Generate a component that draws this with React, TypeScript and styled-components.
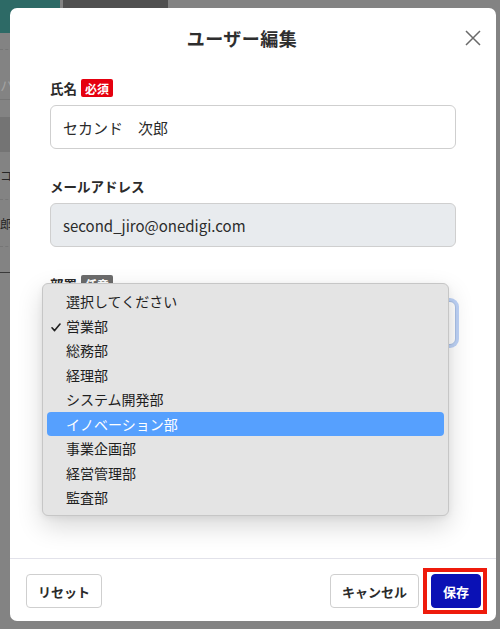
import React from "react";
import styled, { createGlobalStyle } from "styled-components";

const GlobalStyle = createGlobalStyle`
  html, body { margin: 0; padding: 0; }
  body {
    font-family: "Noto Sans CJK JP", "Noto Sans", sans-serif;
    background: #838383;
    color: #2b2b2b;
  }
  * { box-sizing: border-box; }
`;

/* ---------- dimmed application behind the dialog ---------- */

const Page = styled.div`
  position: relative;
  width: 500px;
  height: 629px;
  overflow: hidden;
  background: #838383;
`;

const TopBar = styled.div`
  display: flex;
  align-items: flex-start;
  gap: 3px;
`;

const Tab = styled.div<{ $w: number; $h: number; $bg: string }>`
  width: ${(p) => p.$w}px;
  height: ${(p) => p.$h}px;
  background: ${(p) => p.$bg};
`;

const SideList = styled.div`
  display: flex;
  flex-direction: column;
  width: 40px;
`;

const Row = styled.div<{ $h: number; $shade?: boolean; $line?: string; $offset?: number }>`
  height: ${(p) => p.$h}px;
  padding-top: ${(p) => p.$offset ?? 0}px;
  display: flex;
  align-items: center;
  font-size: 12px;
  color: #262626;
  background: ${(p) => (p.$shade ? "#747474" : "transparent")};
  border-bottom: ${(p) => p.$line ?? "none"};
`;

const Faint = styled.span`
  color: #a2a2a2;
  font-size: 14px;
`;

/* ---------- dialog ---------- */

const Dialog = styled.div`
  position: absolute;
  top: 8px;
  left: 10px;
  width: 486px;
  height: 613px;
  background: #fff;
  border-radius: 7px;
  display: flex;
  flex-direction: column;
`;

const Header = styled.div`
  height: 60px;
  padding: 0 15px;
  display: flex;
  align-items: center;
`;

const Title = styled.h2`
  flex: 1;
  margin: 0;
  text-align: center;
  font-size: 18px;
  letter-spacing: 0.5px;
  font-weight: 700;
  color: #2e2e2e;
`;

const CloseButton = styled.button`
  width: 22px;
  height: 22px;
  padding: 0;
  border: none;
  background: none;
  display: flex;
  align-items: center;
  justify-content: flex-end;
`;

const Body = styled.div`
  flex: 1;
  padding: 11px 40px 0;
  display: flex;
  flex-direction: column;
`;

const Field = styled.div`
  position: relative;
  display: flex;
  flex-direction: column;
  gap: 8px;
  margin-bottom: 28px;
`;

const LabelRow = styled.div`
  height: 18px;
  display: flex;
  align-items: center;
  gap: 4px;
`;

const Label = styled.label`
  font-size: 13.5px;
  font-weight: 700;
  color: #2b2b2b;
`;

const Badge = styled.span<{ $tone: "required" | "optional" }>`
  height: 18px;
  padding: 0 4px;
  border-radius: 2px;
  display: inline-flex;
  align-items: center;
  font-size: 12px;
  font-weight: 700;
  color: #fff;
  background: ${(p) => (p.$tone === "required" ? "#e5000f" : "#6c6c6c")};
`;

const Input = styled.div<{ $disabled?: boolean; $focused?: boolean }>`
  height: 44px;
  padding: 0 12px;
  display: flex;
  align-items: center;
  font-size: 15px;
  color: #2b2b2b;
  border-radius: 6px;
  border: 1px solid ${(p) => (p.$focused ? "#a9c0e6" : "#cfcfcf")};
  background: ${(p) => (p.$disabled ? "#e8ebee" : "#fff")};
  box-shadow: ${(p) => (p.$focused ? "0 0 0 3px #bdd2f6" : "none")};
`;

/* native-looking popup list of the department select */
const Menu = styled.ul`
  position: absolute;
  top: 8px;
  left: -8px;
  width: 407px;
  margin: 0;
  padding: 5px 0 5px;
  list-style: none;
  background: #e4e4e4;
  border: 1px solid #c6c6c6;
  border-radius: 6px;
  box-shadow: 0 10px 26px rgba(0, 0, 0, 0.16), 0 2px 6px rgba(0, 0, 0, 0.06);
  z-index: 2;
`;

const Option = styled.li<{ $active?: boolean }>`
  height: 24.5px;
  margin: 0 4px 0 4px;
  padding-left: 4px;
  display: grid;
  grid-template-columns: 15px 1fr;
  align-items: center;
  font-size: 14px;
  color: ${(p) => (p.$active ? "#fff" : "#1f1f1f")};
  background: ${(p) => (p.$active ? "#56a0fe" : "transparent")};
  border-radius: 4px;
`;

const Footer = styled.div`
  padding: 15px 15px 13px 16px;
  border-top: 1px solid #e2e2ea;
  display: flex;
  justify-content: space-between;
  align-items: center;
`;

const Actions = styled.div`
  display: flex;
  gap: 12px;
`;

const Button = styled.button<{ $primary?: boolean }>`
  position: relative;
  height: 34px;
  padding: 0 11px;
  font-family: inherit;
  font-size: 13px;
  font-weight: 700;
  border-radius: 4px;
  border: 1px solid ${(p) => (p.$primary ? "#0a11b5" : "#cfcfcf")};
  background: ${(p) => (p.$primary ? "#0a11b5" : "#fff")};
  color: ${(p) => (p.$primary ? "#fff" : "#2b2b2b")};
`;

/* red highlight frame drawn around the save button */
const Highlight = styled.div`
  position: relative;
  display: flex;
  &::after {
    content: "";
    position: absolute;
    top: -6px;
    right: -6px;
    bottom: -6px;
    left: -8px;
    border: 4px solid #ee1b0c;
    pointer-events: none;
  }
`;

const departments = [
  "選択してください",
  "営業部",
  "総務部",
  "経理部",
  "システム開発部",
  "イノベーション部",
  "事業企画部",
  "経営管理部",
  "監査部",
];

const Check = () => (
  <svg width="10" height="9" viewBox="0 0 10 9">
    <polyline
      points="1,4.8 3.6,7.6 9,1"
      fill="none"
      stroke="#1f1f1f"
      strokeWidth="1.6"
      strokeLinecap="round"
      strokeLinejoin="round"
    />
  </svg>
);

const CloseIcon = () => (
  <svg width="16" height="16" viewBox="0 0 16 16">
    <path d="M1 1 L15 15 M15 1 L1 15" stroke="#6a6a6a" strokeWidth="1.5" />
  </svg>
);

export default function App() {
  const selected = "営業部";
  const hovered = "イノベーション部";
  return (
    <Page>
      <GlobalStyle />
      <TopBar>
        <Tab $w={60} $h={33} $bg="#2d6a66" />
        <Tab $w={105} $h={9} $bg="#505050" />
      </TopBar>
      <SideList>
        <Row $h={17} $line="1px dashed #767676" />
        <Row $h={50} $offset={20} $line="1px solid #767676">
          <Faint>ハ</Faint>
        </Row>
        <Row $h={17} />
        <Row $h={35} $shade />
        <Row $h={48} $line="1px dashed #767676">
          コ
        </Row>
        <Row $h={47} $line="1px dashed #767676">
          郎
        </Row>
        <Row $h={26} $line="1px solid #3a3a3a" />
      </SideList>

      <Dialog>
        <Header>
          <Title>ユーザー編集</Title>
          <CloseButton aria-label="閉じる">
            <CloseIcon />
          </CloseButton>
        </Header>

        <Body>
          <Field>
            <LabelRow>
              <Label>氏名</Label>
              <Badge $tone="required">必須</Badge>
            </LabelRow>
            <Input>セカンド　次郎</Input>
          </Field>

          <Field>
            <LabelRow>
              <Label>メールアドレス</Label>
            </LabelRow>
            <Input $disabled>second_jiro@onedigi.com</Input>
          </Field>

          <Field>
            <LabelRow>
              <Label>部署</Label>
              <Badge $tone="optional">任意</Badge>
            </LabelRow>
            <Input $focused />
            <Menu>
              {departments.map((d) => (
                <Option key={d} $active={d === hovered}>
                  <span>{d === selected ? <Check /> : null}</span>
                  <span>{d}</span>
                </Option>
              ))}
            </Menu>
          </Field>
        </Body>

        <Footer>
          <Button>リセット</Button>
          <Actions>
            <Button>キャンセル</Button>
            <Highlight>
              <Button $primary>保存</Button>
            </Highlight>
          </Actions>
        </Footer>
      </Dialog>
    </Page>
  );
}
